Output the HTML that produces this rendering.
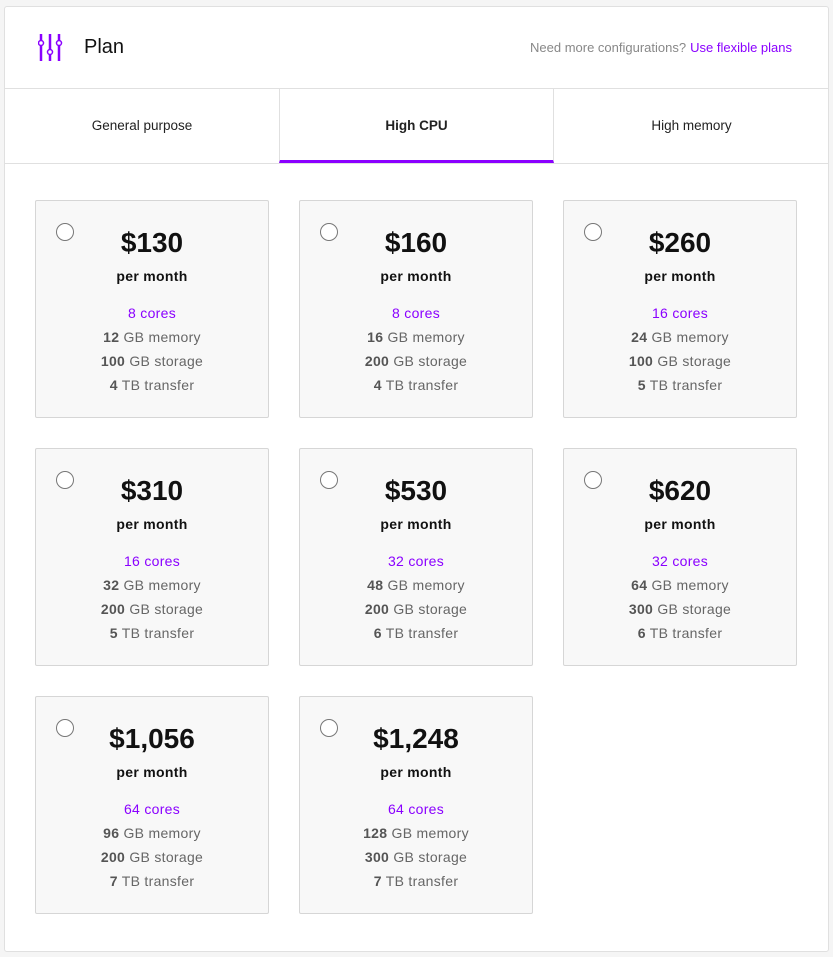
<!DOCTYPE html>
<html><head><style>
*{box-sizing:border-box;margin:0;padding:0}
body{width:833px;height:957px;background:#f5f5f5;font-family:"Liberation Sans",sans-serif;position:relative;overflow:hidden}
.panel{position:absolute;left:4px;top:6px;width:825px;height:946px;background:#fff;border:1px solid #e0e0e0;border-radius:3px}
.hdr{position:absolute;left:0;top:0;width:100%;height:82px;border-bottom:1px solid #e0e0e0}
.title{position:absolute;left:79px;top:29px;font-size:20px;color:#111}
.more{position:absolute;right:36px;top:33px;font-size:13px;color:#888}
.more a{color:#8a00ff;text-decoration:none;margin-left:4px}
.tabs{position:absolute;left:0;top:82px;width:100%;height:75px;border-bottom:1px solid #e0e0e0}
.tab{position:absolute;top:0;height:74px;font-size:13.5px;color:#222;text-align:center;line-height:74px}
.tab.a{font-weight:bold;border-bottom:3px solid #8a00ff;border-left:1px solid #e0e0e0;border-right:1px solid #e0e0e0;line-height:74px}
.card{position:absolute;width:234px;height:218px;background:#f8f8f8;border:1px solid #d6d6d6;border-radius:2px;text-align:center}
.r{position:absolute;left:20px;top:22px;width:18px;height:18px;border:1.3px solid #777;border-radius:50%;background:#fff}
.p{position:absolute;left:0;right:0;top:26px;font-size:28px;font-weight:bold;color:#111}
.pm{position:absolute;left:0;right:0;top:67px;font-size:14px;font-weight:bold;color:#111;letter-spacing:.3px}
.sp{position:absolute;left:0;right:0;top:100px;font-size:14px;color:#666;line-height:24px;letter-spacing:.3px}
.sp b{color:#555}
.c{color:#8a00ff}.c b{color:#8a00ff;font-weight:normal}
</style></head><body>
<div class="panel">
<div class="hdr">
<svg style="position:absolute;left:33px;top:26px" width="26" height="30" viewBox="0 0 26 30">
<g stroke="#8a00ff" stroke-width="2.5" fill="#fff"><line x1="3" y1="1" x2="3" y2="28"/><line x1="12" y1="1" x2="12" y2="28"/><line x1="21" y1="1" x2="21" y2="28"/>
<circle cx="3" cy="10" r="2.5" stroke-width="1.5"/><circle cx="12" cy="19" r="2.5" stroke-width="1.5"/><circle cx="21" cy="10" r="2.5" stroke-width="1.5"/></g></svg>
<div class="title">Plan</div>
<div class="more">Need more configurations?<a>Use flexible plans</a></div>
</div>
<div class="tabs">
<div class="tab" style="left:0;width:274px">General purpose</div>
<div class="tab a" style="left:274px;width:275px">High CPU</div>
<div class="tab" style="left:549px;width:275px">High memory</div>
</div>
</div>
<div class="card" style="left:35px;top:200px"><div class="r"></div><div class="p">$130</div><div class="pm">per month</div><div class="sp"><div class="c"><b>8</b> cores</div><div><b>12</b> GB memory</div><div><b>100</b> GB storage</div><div><b>4</b> TB transfer</div></div></div>
<div class="card" style="left:299px;top:200px"><div class="r"></div><div class="p">$160</div><div class="pm">per month</div><div class="sp"><div class="c"><b>8</b> cores</div><div><b>16</b> GB memory</div><div><b>200</b> GB storage</div><div><b>4</b> TB transfer</div></div></div>
<div class="card" style="left:563px;top:200px"><div class="r"></div><div class="p">$260</div><div class="pm">per month</div><div class="sp"><div class="c"><b>16</b> cores</div><div><b>24</b> GB memory</div><div><b>100</b> GB storage</div><div><b>5</b> TB transfer</div></div></div>
<div class="card" style="left:35px;top:448px"><div class="r"></div><div class="p">$310</div><div class="pm">per month</div><div class="sp"><div class="c"><b>16</b> cores</div><div><b>32</b> GB memory</div><div><b>200</b> GB storage</div><div><b>5</b> TB transfer</div></div></div>
<div class="card" style="left:299px;top:448px"><div class="r"></div><div class="p">$530</div><div class="pm">per month</div><div class="sp"><div class="c"><b>32</b> cores</div><div><b>48</b> GB memory</div><div><b>200</b> GB storage</div><div><b>6</b> TB transfer</div></div></div>
<div class="card" style="left:563px;top:448px"><div class="r"></div><div class="p">$620</div><div class="pm">per month</div><div class="sp"><div class="c"><b>32</b> cores</div><div><b>64</b> GB memory</div><div><b>300</b> GB storage</div><div><b>6</b> TB transfer</div></div></div>
<div class="card" style="left:35px;top:696px"><div class="r"></div><div class="p">$1,056</div><div class="pm">per month</div><div class="sp"><div class="c"><b>64</b> cores</div><div><b>96</b> GB memory</div><div><b>200</b> GB storage</div><div><b>7</b> TB transfer</div></div></div>
<div class="card" style="left:299px;top:696px"><div class="r"></div><div class="p">$1,248</div><div class="pm">per month</div><div class="sp"><div class="c"><b>64</b> cores</div><div><b>128</b> GB memory</div><div><b>300</b> GB storage</div><div><b>7</b> TB transfer</div></div></div>
</body></html>
